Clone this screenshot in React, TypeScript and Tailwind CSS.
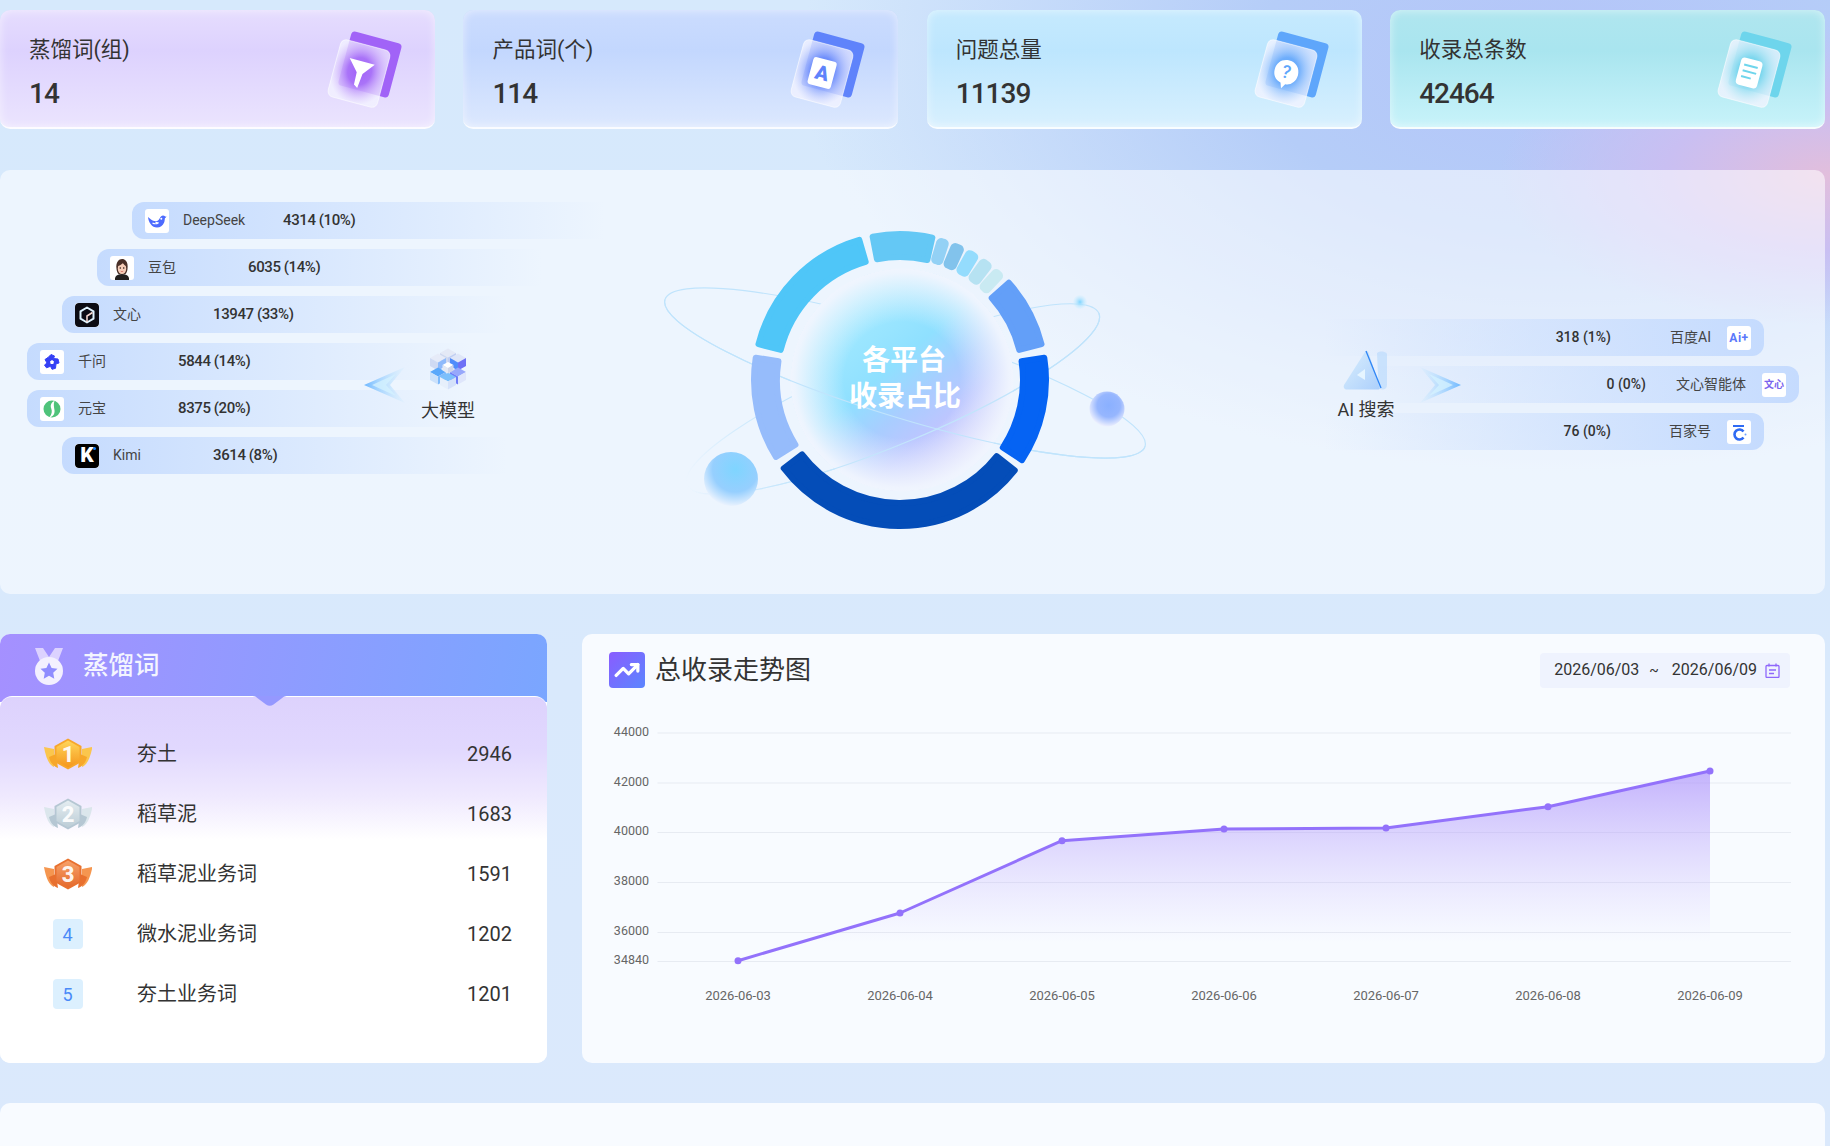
import { TrendingUp } from 'lucide-react';
import type { ReactNode } from 'react';

const stats = [
  { label: '蒸馏词(组)', value: '14', bg: 'bg-[linear-gradient(180deg,#e6ddfe_0%,#ddd2fe_35%,#ebe4fe_100%)]', color: '#a163f7', kind: 'funnel' },
  { label: '产品词(个)', value: '114', bg: 'bg-[linear-gradient(180deg,#cbdcfe_0%,#c3d7fe_35%,#dce8fe_100%)]', color: '#5f83fb', kind: 'a' },
  { label: '问题总量', value: '11139', bg: 'bg-[linear-gradient(180deg,#c6eafe_0%,#bde6fe_35%,#d8f0fe_100%)]', color: '#5ea6fb', kind: 'question' },
  { label: '收录总条数', value: '42464', bg: 'bg-[linear-gradient(180deg,#b0e6ef_0%,#a9e5ef_35%,#c8f3fa_100%)]', color: '#6ed5ec', kind: 'doc' },
];

const models = [
  { name: 'DeepSeek', value: '4314 (10%)', ml: 'ml-[132px]', icon: <DeepSeekIcon /> },
  { name: '豆包', value: '6035 (14%)', ml: 'ml-[97px]', icon: <DoubaoIcon /> },
  { name: '文心', value: '13947 (33%)', ml: 'ml-[62px]', icon: <WenxinIcon /> },
  { name: '千问', value: '5844 (14%)', ml: 'ml-[27px]', icon: <QianwenIcon /> },
  { name: '元宝', value: '8375 (20%)', ml: 'ml-[27px]', icon: <YuanbaoIcon /> },
  { name: 'Kimi', value: '3614 (8%)', ml: 'ml-[62px]', icon: <KimiIcon /> },
];

const searches = [
  { name: '百度AI', value: '318 (1%)', mr: 'mr-[61px]', icon: <span className="text-[12px] font-bold text-[#5a78fb] tracking-[0.5px]">Ai+</span> },
  { name: '文心智能体', value: '0 (0%)', mr: 'mr-[26px]', icon: <span className="text-[10px] font-bold text-[#7a63ee]">文心</span> },
  { name: '百家号', value: '76 (0%)', mr: 'mr-[61px]', icon: <BaijiaIcon /> },
];

const keywords = [
  { name: '夯土', count: 2946 },
  { name: '稻草泥', count: 1683 },
  { name: '稻草泥业务词', count: 1591 },
  { name: '微水泥业务词', count: 1202 },
  { name: '夯土业务词', count: 1201 },
];

const gridRows = [
  { label: '44000', y: 33 },
  { label: '42000', y: 83 },
  { label: '40000', y: 132.500 },
  { label: '38000', y: 182.500 },
  { label: '36000', y: 232.500 },
  { label: '34840', y: 261.500 },
];

const points = [
  { date: '2026-06-03', x: 156, y: 260.700 },
  { date: '2026-06-04', x: 318, y: 213 },
  { date: '2026-06-05', x: 480, y: 140.700 },
  { date: '2026-06-06', x: 642, y: 129 },
  { date: '2026-06-07', x: 804, y: 128 },
  { date: '2026-06-08', x: 966, y: 106.700 },
  { date: '2026-06-09', x: 1128, y: 71 },
];

const segments = [
  { from: -12, to: 14, color: '#64c8f5' },
  { from: 14.500, to: 20, color: '#93d1f5', small: true },
  { from: 20.500, to: 26.500, color: '#82c3ec', small: true },
  { from: 27, to: 33, color: '#94dcfd', small: true },
  { from: 33.500, to: 39.500, color: '#b6e2f2', small: true },
  { from: 40, to: 45.500, color: '#c9eaf2', small: true },
  { from: 47, to: 77, color: '#639ff8' },
  { from: 80, to: 124.500, color: '#0563f3' },
  { from: 127, to: 234, color: '#044db8' },
  { from: 237, to: 280, color: '#96bcfb' },
  { from: 283, to: 345, color: '#4fc6f8' },
];

function polar(cx: number, cy: number, r: number, deg: number) {
  const rad = (deg * Math.PI) / 180;
  return `${(cx + r * Math.sin(rad)).toFixed(2)} ${(cy - r * Math.cos(rad)).toFixed(2)}`;
}

function sector(from: number, to: number, small?: boolean) {
  const cx = 250;
  const cy = 170;
  const outer = small ? 143 : 146;
  const inner = small ? 126 : 123;
  const a = from + (small ? 2.200 : 1.200);
  const b = to - (small ? 2.200 : 1.200);
  const large = b - a > 180 ? 1 : 0;
  return `M${polar(cx, cy, outer, a)}A${outer} ${outer} 0 ${large} 1 ${polar(cx, cy, outer, b)}L${polar(cx, cy, inner, b)}A${inner} ${inner} 0 ${large} 0 ${polar(cx, cy, inner, a)}Z`;
}

function IconBox({ children }: { children: ReactNode }) {
  return <div className="flex items-center justify-center w-6 h-6 rounded-[3px] overflow-hidden bg-white shrink-0">{children}</div>;
}

function DeepSeekIcon() {
  return (
    <svg viewBox="0 0 24 24" className="w-6 h-6">
      <path d="M3 8c1 .8 2 1.800 3 2.500 2 1.400 4 2 6 1.500 1.500-.4 2.300-1.800 3-3.200.6-1.200 1.600-2.300 3-2.300.8 0 1.400.3 2 .8.500.4 1 .4 1.500.2-.3.8-.9 1.400-1.600 1.700-.2 1.700-.2 3-.9 4.500-1.200 2.800-3.800 4.800-7 4.800C7 18.500 3.500 13.500 3 8z" fill="#4d6bfe" />
      <path d="M7.500 14c1.800 1 4 1 6-.3-1 .1-2 0-3-.5" stroke="#fff" strokeWidth="1.200" fill="none" />
      <circle cx="16.300" cy="9.800" r="1" fill="#fff" />
    </svg>
  );
}

function DoubaoIcon() {
  return (
    <svg viewBox="0 0 24 24" className="w-6 h-6">
      <path d="M5 22c1-3 3.500-4 7-4s6 1 7 4v2H5z" fill="#22201f" />
      <path d="M6.500 13C5.500 6 9 3 12 3s6.500 2.500 5.500 10c-.3 2.500-1 4-2 5H8.500c-1-1-1.700-2.500-2-5z" fill="#4a3028" />
      <ellipse cx="12" cy="12.500" rx="4.200" ry="5.500" fill="#f6cdb8" />
      <path d="M8 10c2-.5 4-2 5-3 .8 1.500 2 2.500 3 3 0-3-1.500-5-4-5s-4 2-4 5z" fill="#4a3028" />
      <circle cx="10.300" cy="12" r=".8" fill="#2b1b16" />
      <circle cx="13.700" cy="12" r=".8" fill="#2b1b16" />
      <path d="M10.800 15.200c.8.500 1.600.5 2.400 0" stroke="#c8564d" strokeWidth=".8" fill="none" />
    </svg>
  );
}

function WenxinIcon() {
  return (
    <div className="w-6 h-6 rounded-[4px] bg-[#0c0c14] flex items-center justify-center">
      <svg viewBox="0 0 24 24" className="w-6 h-6" fill="none">
        <path d="M12 4.500l6.500 3.800v7.400L12 19.500l-6.500-3.800V8.300z" stroke="#dff3ff" strokeWidth="2" strokeLinejoin="round" />
        <path d="M12 19v-6l5.500-3.500" stroke="#f6d6cf" strokeWidth="1.600" />
      </svg>
    </div>
  );
}

function QianwenIcon() {
  return (
    <svg viewBox="0 0 24 24" className="w-6 h-6">
      <path d="M11 4.500l3.500 1.500-1 2.500 4.500.5 1 4-3 .8-.5 4.500-3.500 1-1.500-3-4 1.500L4.500 15l2.500-2-2-3.500L8 7.500z" fill="#3540f5" stroke="#3540f5" strokeWidth="1" strokeLinejoin="round" />
      <path d="M12 10l2 1.500-.7 2.500h-2.600L10 11.500z" fill="#fff" />
    </svg>
  );
}

function YuanbaoIcon() {
  return (
    <svg viewBox="0 0 24 24" className="w-6 h-6">
      <circle cx="12" cy="12" r="8.500" fill="#4fc37a" />
      <path d="M14.500 3.800c-3.500 1.700-4.500 4.700-3.200 8 1 2.600.6 5.500-1.800 8.400 3.500-.6 5.500-3.300 5-7-.4-3-1.300-6 0-9.400z" fill="#ffffff" />
    </svg>
  );
}

function KimiIcon() {
  return (
    <div className="relative w-6 h-6 rounded-[4px] bg-black flex items-center justify-center">
      <span className="text-white text-[21px] leading-none font-black">K</span>
      <span className="absolute top-[3px] right-[3px] w-[3px] h-[3px] rounded-full bg-[#1783ff]" />
    </div>
  );
}

function BaijiaIcon() {
  return (
    <svg viewBox="0 0 24 24" className="w-6 h-6" fill="none">
      <path d="M6 6h11" stroke="#2f6bf3" strokeWidth="2" />
      <path d="M16.500 11.500a5 5 0 1 0 0 6" stroke="#2f6bf3" strokeWidth="2.600" />
      <circle cx="18.500" cy="14.500" r="1" fill="#6aa0ff" />
    </svg>
  );
}

function CardIcon({ color, kind }: { color: string; kind: string }) {
  const id = `glow-${kind}`;
  return (
    <svg width="90" height="90" viewBox="0 0 90 90" className="shrink-0 overflow-visible">
      <defs>
        <radialGradient id={id} cx="50%" cy="46%" r="58%">
          <stop offset="0%" stopColor={color} />
          <stop offset="40%" stopColor={color} stopOpacity="0.8" />
          <stop offset="100%" stopColor="#ffffff" stopOpacity="0.4" />
        </radialGradient>
      </defs>
      <rect x="24" y="12.500" width="52" height="56" rx="4" fill={color} transform="rotate(15 50 40.500)" />
      <g transform="rotate(15 39 49.500)">
        <rect x="13.500" y="20" width="51" height="59" rx="6" fill="#e8e8ff" fillOpacity="0.6" />
        <rect x="13.500" y="20" width="51" height="59" rx="6" fill={`url(#${id})`} stroke="#ffffff" strokeOpacity="0.55" strokeWidth="1" />
        {kind === 'funnel' && <path d="M26 37h26L42.500 49l-1.500 15-4-2.500-.5-12.500z" fill="#fff" />}
        {kind === 'a' && (
          <>
            <rect x="27" y="35" width="24" height="28" rx="3" fill="#fff" />
            <text x="39" y="56" textAnchor="middle" fontSize="20" fontWeight="900" fill={color} fontFamily="Roboto, sans-serif">A</text>
          </>
        )}
        {kind === 'question' && (
          <>
            <path d="M39 36c7 0 12 5 12 12s-5 12-10 12l-3 5-2-5.500C30 58 27 54 27 48c0-7 5-12 12-12z" fill="#fff" />
            <text x="39" y="54" textAnchor="middle" fontSize="18" fontWeight="500" fill={color} fontFamily="Roboto, sans-serif">?</text>
          </>
        )}
        {kind === 'doc' && (
          <>
            <rect x="28" y="35" width="22" height="28" rx="4" fill="#fff" />
            <path d="M32 42h14M32 48h14M32 54h10" stroke={color} strokeWidth="2" />
          </>
        )}
      </g>
    </svg>
  );
}

function StatCard({ label, value, bg, color, kind }: (typeof stats)[number]) {
  return (
    <div className={`flex items-center justify-between h-[119px] pl-[29px] pr-[25px] rounded-[10px] border-b-2 border-white/90 shadow-[inset_0_0_10px_rgba(255,255,255,0.55)] ${bg}`}>
      <div className="pt-[8px]">
        <div className="text-[21.500px] leading-[28px] text-[#333]">{label}</div>
        <div className="mt-[15px] text-[28px] tracking-[-1px] leading-[30px] font-medium text-[#333]">{value}</div>
      </div>
      <CardIcon color={color} kind={kind} />
    </div>
  );
}

function SideArrow({ flip }: { flip?: boolean }) {
  const id = flip ? 'arrow-r' : 'arrow-l';
  return (
    <svg width="42" height="36" viewBox="0 0 42 36" className={flip ? 'rotate-180' : ''}>
      <defs>
        <linearGradient id={id} x1="0" x2="1" y1="0" y2="0">
          <stop offset="0%" stopColor="#6fb8ff" />
          <stop offset="100%" stopColor="#b8e4ff" stopOpacity="0.1" />
        </linearGradient>
      </defs>
      <path d="M0 18L41 0 26 18l15 18z" fill={`url(#${id})`} />
      <path d="M8 18L32 7 22 18l10 11z" fill="#d3f1ff" fillOpacity="0.8" />
    </svg>
  );
}

function IsoCube({ x, y, s, top, left, right }: { x: number; y: number; s: number; top: string; left: string; right: string }) {
  const h = s * 0.55;
  return (
    <g>
      <polygon points={`${x},${y - h} ${x + s},${y} ${x},${y + h} ${x - s},${y}`} fill={top} />
      <polygon points={`${x - s},${y} ${x},${y + h} ${x},${y + h + s} ${x - s},${y + s}`} fill={left} />
      <polygon points={`${x + s},${y} ${x},${y + h} ${x},${y + h + s} ${x + s},${y + s}`} fill={right} />
    </g>
  );
}

function ModelCube() {
  return (
    <svg width="36" height="42" viewBox="0 0 36 42">
      <IsoCube x={18} y={5} s={8} top="#e4e9f6" left="#cfd8ef" right="#c0cef2" />
      <IsoCube x={8} y={10} s={8} top="#e6ebf8" left="#cfdaf3" right="#8fbafb" />
      <IsoCube x={28} y={10} s={8} top="#dfe6f8" left="#4f8cfb" right="#6d70f6" />
      <IsoCube x={8} y={24} s={8} top="#5aa8fb" left="#cbe1fb" right="#7fbafb" />
      <IsoCube x={28} y={24} s={8} top="#97a8fb" left="#6f7cf8" right="#dfe6fb" />
      <IsoCube x={18} y={29} s={8} top="#7cc0fb" left="#e6effb" right="#d5e2fa" />
      <IsoCube x={18} y={17} s={5.500} top="#ffffff" left="#e3e8f3" right="#cfd5e8" />
    </svg>
  );
}

function SearchLogo() {
  return (
    <svg width="46" height="40" viewBox="0 0 46 40">
      <defs>
        <linearGradient id="ai-logo" x1="0" x2="1" y1="0" y2="1">
          <stop offset="0%" stopColor="#d5eefd" />
          <stop offset="100%" stopColor="#98c4fb" />
        </linearGradient>
      </defs>
      <path d="M1 35L22 2c1.500-1.500 3-1 3.500.5L37 38c-.3 1-1 1.500-2 1.500H4C1.500 39.500 0 37.500 1 35z" fill="url(#ai-logo)" fillOpacity="0.75" />
      <path d="M14 25l8-6v11z" fill="#e6f5ff" />
      <path d="M34 3c4-2.500 9-1.500 10 1v31c0 3-2 4.500-5 4.500-2 0-3-1.500-3.500-3.500z" fill="#bcdcfc" fillOpacity="0.7" />
      <path d="M23 1l15 37" stroke="#2f86f6" strokeWidth="1.300" fill="none" />
    </svg>
  );
}

function Medal({ rank }: { rank: number }) {
  const tones: Record<number, { wing: string; wing2: string; hexA: string; hexB: string }> = {
    1: { wing: '#f7a72a', wing2: '#fbc64d', hexA: '#ffd65a', hexB: '#f5961c' },
    2: { wing: '#b5c7d3', wing2: '#dbe6ec', hexA: '#e4edf1', hexB: '#bccdd6' },
    3: { wing: '#e8702f', wing2: '#f59650', hexA: '#f7a169', hexB: '#e46a2d' },
  };
  const t = tones[rank];
  const id = `medal-${rank}`;
  return (
    <svg width="50" height="32" viewBox="0 0 50 32">
      <defs>
        <linearGradient id={id} x1="0" x2="0" y1="0" y2="1">
          <stop offset="0%" stopColor={t.hexA} />
          <stop offset="100%" stopColor={t.hexB} />
        </linearGradient>
      </defs>
      <path d="M1 9l10 2v18C6 27 3 20 1 9z" fill={t.wing2} />
      <path d="M49 9l-10 2v18c5-2 8-9 10-18z" fill={t.wing2} />
      <path d="M6 19c1 5 4 9 9 11l-2-14zM44 19c-1 5-4 9-9 11l2-14z" fill={t.wing} />
      <polygon points="25,0.500 38.500,8 38.500,24 25,31.500 11.500,24 11.500,8" fill={t.wing} />
      <polygon points="25,2.500 36.500,9 36.500,23 25,29.500 13.500,23 13.500,9" fill={`url(#${id})`} />
      <text x="25" y="24" textAnchor="middle" fontSize="22" fontWeight="800" fill="#fff" fillOpacity="0.92" fontFamily="Roboto, sans-serif">{rank}</text>
    </svg>
  );
}

function RingChart() {
  return (
    <svg width="520" height="340" viewBox="0 0 520 340" className="overflow-visible">
      <defs>
        <linearGradient id="core-fill" x1="0.22" y1="0.18" x2="0.82" y2="0.88">
          <stop offset="0%" stopColor="#a6ebff" />
          <stop offset="38%" stopColor="#8fe0ff" />
          <stop offset="58%" stopColor="#a9cdff" />
          <stop offset="74%" stopColor="#bcc6ff" />
          <stop offset="100%" stopColor="#dbd2fb" />
        </linearGradient>
        <radialGradient id="core-edge">
          <stop offset="0%" stopColor="#eef5fe" stopOpacity="0" />
          <stop offset="52%" stopColor="#eef5fe" stopOpacity="0" />
          <stop offset="96%" stopColor="#f0f5fe" stopOpacity="0.96" />
          <stop offset="100%" stopColor="#f0f5fe" />
        </radialGradient>
        <linearGradient id="orbit-b" x1="0" x2="1" y1="0" y2="0">
          <stop offset="0%" stopColor="#c4e6fc" stopOpacity="0" />
          <stop offset="25%" stopColor="#c4e6fc" />
          <stop offset="100%" stopColor="#bfe3fb" />
        </linearGradient>
        <radialGradient id="ball-big" cx="58%" cy="32%" r="70%">
          <stop offset="0%" stopColor="#7fd5ff" />
          <stop offset="60%" stopColor="#96cffe" />
          <stop offset="100%" stopColor="#eef4fe" />
        </radialGradient>
        <radialGradient id="ball-mid" cx="55%" cy="40%" r="60%">
          <stop offset="0%" stopColor="#8ab0ff" />
          <stop offset="55%" stopColor="#96b6fe" />
          <stop offset="100%" stopColor="#eceffe" />
        </radialGradient>
        <radialGradient id="ball-small">
          <stop offset="0%" stopColor="#7fd5ff" />
          <stop offset="100%" stopColor="#d8f0fe" stopOpacity="0.3" />
        </radialGradient>
      </defs>

      <ellipse cx="255" cy="163" rx="251" ry="45" fill="none" stroke="#c0e4fc" strokeWidth="1.200" transform="rotate(17 255 163)" />
      <ellipse cx="243" cy="189" rx="223" ry="45" fill="none" stroke="url(#orbit-b)" strokeWidth="1.200" transform="rotate(-22.600 243 189)" />

      <circle cx="252" cy="170" r="111" fill="url(#core-fill)" />
      <circle cx="252" cy="170" r="111.500" fill="url(#core-edge)" />

      <path d="M-251 0A251 45 0 0 0 251 0" fill="none" stroke="#c0e4fc" strokeWidth="1.200" transform="translate(255 163) rotate(17)" />
      <path d="M-223 0A223 45 0 0 0 223 0" fill="none" stroke="url(#orbit-b)" strokeWidth="1.200" transform="translate(243 189) rotate(-22.600)" />

      {segments.map((s) => (
        <path key={s.from} d={sector(s.from, s.to, s.small)} fill={s.color} stroke={s.color} strokeWidth={s.small ? 10 : 6} strokeLinejoin="round" />
      ))}

      <circle cx="81" cy="269" r="27" fill="url(#ball-big)" />
      <circle cx="457" cy="199" r="17.500" fill="url(#ball-mid)" />
      <circle cx="430" cy="92" r="7" fill="url(#ball-small)" />

      <text x="254" y="160" textAnchor="middle" fontSize="28" fontWeight="700" fill="#fff">各平台</text>
      <text x="255" y="196" textAnchor="middle" fontSize="28" fontWeight="700" fill="#fff">收录占比</text>
    </svg>
  );
}

function TrendChart() {
  const line = points.map((p) => `${p.x},${p.y}`).join(' ');
  const area = `${line} 1128,262 156,262`;
  return (
    <svg width="1243" height="363" viewBox="0 0 1243 363" className="block">
      <defs>
        <linearGradient id="trend-fill" x1="0" x2="0" y1="0" y2="1">
          <stop offset="0%" stopColor="#a88cfb" stopOpacity="0.65" />
          <stop offset="90%" stopColor="#c4b5fd" stopOpacity="0" />
        </linearGradient>
      </defs>
      {gridRows.map((row) => (
        <g key={row.label}>
          <line x1="75.500" x2="1209" y1={row.y} y2={row.y} stroke="#e7ebf2" strokeWidth="1" />
          <text x="67" y={row.y + 2.500} textAnchor="end" fontSize="12.500" fill="#666">{row.label}</text>
        </g>
      ))}
      <polygon points={area} fill="url(#trend-fill)" />
      <polyline points={line} fill="none" stroke="#9372fb" strokeWidth="3" strokeLinejoin="round" />
      {points.map((p) => (
        <g key={p.date}>
          <circle cx={p.x} cy={p.y} r="3.500" fill="#9372fb" />
          <text x={p.x} y="300" textAnchor="middle" fontSize="13" fill="#666">{p.date}</text>
        </g>
      ))}
    </svg>
  );
}

export default function App() {
  return (
    <div className="w-[1830px] h-[1146px] overflow-hidden pt-[10px] pr-[5px] text-[#333] font-['Roboto','Noto_Sans_CJK_SC',sans-serif] bg-[#dbe9fc] bg-[radial-gradient(ellipse_330px_150px_at_1830px_175px,#e2bedc_0%,#c9bff2_50%,#c9bff200_100%),radial-gradient(ellipse_760px_420px_at_1560px_60px,#b4c4f9_0%,#b5cdf8_40%,#bcdcf800_100%),linear-gradient(180deg,#d6e9fc_0%,#dbe9fc_100%)]">
      <div className="grid grid-cols-4 gap-x-[28.500px]">
        {stats.map((s) => (
          <StatCard key={s.label} {...s} />
        ))}
      </div>

      <section className="flex mt-[41px] h-[424px] rounded-[10px] bg-white/55 relative">
        <div className="w-[605px] shrink-0 pt-[32px] flex flex-col gap-[10px]">
          {models.map((m) => (
            <div key={m.name} className={`${m.ml} flex items-center h-[37px] w-[445px] pl-[13px] rounded-l-[12px] bg-[linear-gradient(90deg,#c5dbfe,#c5dbfe00)] first:w-[473px]`}>
              <IconBox>{m.icon}</IconBox>
              <span className="ml-[14px] w-[100px] text-[14px] text-[#444]">{m.name}</span>
              <span className="text-[15px] tracking-[-0.4px] font-medium text-[#333]">{m.value}</span>
            </div>
          ))}
        </div>

        <div className="ml-[45px] mt-[40px] w-[520px] h-[340px] shrink-0">
          <RingChart />
        </div>

        <div className="flex-1 pt-[149px] flex flex-col items-end gap-[10px]">
          {searches.map((s) => (
            <div key={s.name} className={`${s.mr} flex items-center justify-end h-[37px] w-[440px] pr-[13px] rounded-r-[12px] bg-[linear-gradient(270deg,#c5dbfe,#c5dbfe00)]`}>
              <span className="text-[14px] font-medium text-[#333]">{s.value}</span>
              <span className="w-[100px] text-right text-[14px] text-[#444] mr-[16px]">{s.name}</span>
              <IconBox>{s.icon}</IconBox>
            </div>
          ))}
        </div>

        <div className="absolute left-[364px] top-[197px]">
          <SideArrow />
        </div>
        <div className="absolute left-[418px] top-[178px] w-[60px] flex flex-col items-center">
          <ModelCube />
          <span className="mt-[8px] text-[18px] leading-[26px] text-[#333]">大模型</span>
        </div>
        <div className="absolute left-[1419px] top-[197px]">
          <SideArrow flip />
        </div>
        <div className="absolute left-[1326px] top-[180px] w-[80px] flex flex-col items-center">
          <SearchLogo />
          <span className="mt-[7px] text-[18px] leading-[26px] text-[#333]">AI 搜索</span>
        </div>
      </section>

      <div className="grid grid-cols-[547px_1fr] gap-x-[35px] mt-[40px] h-[429px]">
        <div className="relative rounded-[10px] overflow-hidden bg-white">
          <div className="flex items-start h-[68px] pl-[35px] pt-[14px] bg-[linear-gradient(100deg,#a590ff,#7aa6ff)]">
            <svg width="28" height="37" viewBox="0 0 28 37">
              <path d="M0 0h8l6 9 6-9h8l-5 13H5z" fill="#dcd2ff" />
              <circle cx="14" cy="23" r="14" fill="#f3f0ff" />
              <path d="M14 14.500l2.600 5.400 5.900.8-4.300 4.100 1.100 5.900-5.300-2.900-5.300 2.900 1.100-5.900-4.300-4.100 5.900-.8z" fill="#8f8cff" />
            </svg>
            <span className="ml-[20px] text-[25.500px] leading-[34px] font-medium text-[#f4f5ff]">蒸馏词</span>
          </div>
          <div className="relative -mt-[6px] h-[367px] pt-[27px] rounded-t-[12px] border-t border-white/80 bg-[linear-gradient(180deg,#ddd2fd_0%,#e1d8fe_14%,#efe9fe_27%,#ffffff_39%,#ffffff_100%)]">
            <svg width="37" height="12" viewBox="0 0 37 12" className="absolute left-[251px] -top-px">
              <path d="M0 0c4 0 5 1 7 2.500l8 6c2.500 1.800 5 1.800 7.500 0l8-6C32.500 1 33 0 37 0z" fill="#9598ff" />
            </svg>
            {keywords.map((k, i) => (
              <div key={k.name} className="flex items-center h-[60px] pr-[35px]">
                <div className="w-[137px] flex justify-center pr-[2px] pl-0">
                  {i < 3 ? (
                    <Medal rank={i + 1} />
                  ) : (
                    <span className="flex items-center justify-center w-[30px] h-[30px] rounded-[4px] bg-[#dcf0fe] text-[18px] text-[#4a8af8]">{i + 1}</span>
                  )}
                </div>
                <span className="flex-1 text-[20px] text-[#333]">{k.name}</span>
                <span className="text-[20px] text-[#333]">{k.count}</span>
              </div>
            ))}
          </div>
        </div>

        <div className="rounded-[10px] bg-[#f8fbff] overflow-hidden">
          <div className="flex items-center justify-between h-[66px] pt-[6px] pl-[27px] pr-[35px]">
            <div className="flex items-center gap-[10px]">
              <div className="flex items-center justify-center w-9 h-9 rounded-[4px] bg-[linear-gradient(135deg,#8a5cff,#5b86ff)]">
                <TrendingUp size={26} color="#fff" strokeWidth={3} />
              </div>
              <span className="text-[26px] text-[#333]">总收录走势图</span>
            </div>
            <div className="flex items-center h-[35px] pl-[14px] pr-[10px] rounded-[4px] bg-[#eff3fe] text-[16px] text-[#333]">
              <span>2026/06/03</span>
              <span className="ml-[10px] mr-[13px] text-[14px]">~</span>
              <span>2026/06/09</span>
              <svg width="15" height="15" viewBox="0 0 15 15" fill="none" className="ml-[8px]" stroke="#8f68fb" strokeWidth="1.300">
                <rect x="1" y="2.500" width="13" height="12" rx="1" />
                <path d="M4 .5v3M11 .5v3M4 7h7M4 10.500h5" />
              </svg>
            </div>
          </div>
          <TrendChart />
        </div>
      </div>

      <div className="mt-[40px] h-[60px] rounded-t-[10px] bg-[#f8fbff]" />
    </div>
  );
}
